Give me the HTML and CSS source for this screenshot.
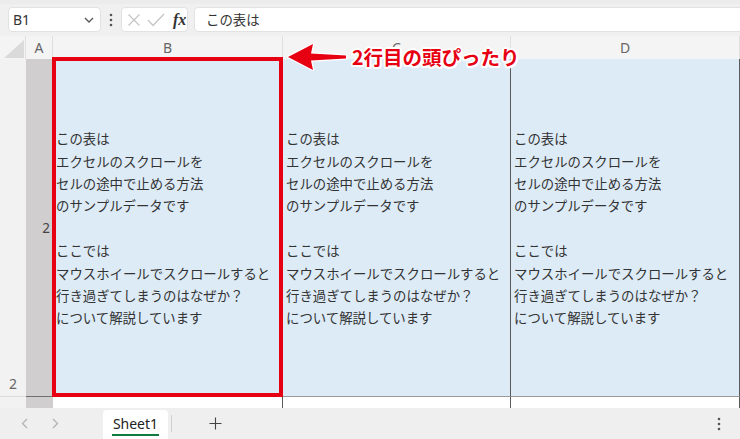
FILE: index.html
```html
<!DOCTYPE html>
<html lang="ja">
<head>
<meta charset="utf-8">
<title>Excel</title>
<link rel="stylesheet" href="styles.css">
</head>
<body>
<div class="app">
  <div class="toolbar">
    <div class="namebox">
      <span class="nb-text">B1</span>
      <svg class="chev" width="10" height="6" viewBox="0 0 10 6"><path d="M1 1 L5 5 L9 1" fill="none" stroke="#555" stroke-width="1.3"/></svg>
    </div>
    <div class="kebab">
      <svg width="4" height="14" viewBox="0 0 4 14"><circle cx="2" cy="2" r="1.3" fill="#555"/><circle cx="2" cy="7" r="1.3" fill="#555"/><circle cx="2" cy="12" r="1.3" fill="#555"/></svg>
    </div>
    <div class="fxbox">
      <svg width="14" height="14" viewBox="0 0 14 14"><path d="M1.5 1.5 L12.5 12.5 M12.5 1.5 L1.5 12.5" stroke="#c4c4c4" stroke-width="1.2"/></svg>
      <svg width="18" height="14" viewBox="0 0 18 14"><path d="M1 7 L6 12.5 L17 1" fill="none" stroke="#c4c4c4" stroke-width="1.2"/></svg>
      <span class="fx">fx</span>
    </div>
    <div class="formula">この表は</div>
  </div>

  <div class="grid">
    <div class="hdr corner"><div class="tri"></div></div>
    <div class="hdr">A</div>
    <div class="hdr">B</div>
    <div class="hdr">C</div>
    <div class="hdr">D</div>

    <div class="rh rh2">2</div>
    <div class="colA colA2">2</div>
    <div class="cell">
      <div class="lines">この表は<br>エクセルのスクロールを<br>セルの途中で止める方法<br>のサンプルデータです<br><br>ここでは<br>マウスホイールでスクロールすると<br>行き過ぎてしまうのはなぜか？<br>について解説しています</div>
    </div>
    <div class="cell">
      <div class="lines">この表は<br>エクセルのスクロールを<br>セルの途中で止める方法<br>のサンプルデータです<br><br>ここでは<br>マウスホイールでスクロールすると<br>行き過ぎてしまうのはなぜか？<br>について解説しています</div>
    </div>
    <div class="cell">
      <div class="lines">この表は<br>エクセルのスクロールを<br>セルの途中で止める方法<br>のサンプルデータです<br><br>ここでは<br>マウスホイールでスクロールすると<br>行き過ぎてしまうのはなぜか？<br>について解説しています</div>
    </div>

    <div class="rh rh3"></div>
    <div class="colA colA3"></div>
    <div class="cell3"></div>
    <div class="cell3"></div>
    <div class="cell3"></div>
  </div>

  <div class="tabs">
    <div class="nav">
      <svg width="7" height="11" viewBox="0 0 7 11"><path d="M6 1 L1.5 5.5 L6 10" fill="none" stroke="#b0b0b0" stroke-width="1.2"/></svg>
      <svg width="7" height="11" viewBox="0 0 7 11"><path d="M1 1 L5.5 5.5 L1 10" fill="none" stroke="#b0b0b0" stroke-width="1.2"/></svg>
    </div>
    <div class="tab"><span class="tab-label">Sheet1</span></div>
    <div class="sep"></div>
    <div class="add">
      <svg width="13" height="13" viewBox="0 0 13 13"><path d="M6.5 0.5 V12.5 M0.5 6.5 H12.5" stroke="#444" stroke-width="1.1"/></svg>
    </div>
    <div class="spacer"></div>
    <div class="more">
      <svg width="4" height="14" viewBox="0 0 4 14"><circle cx="2" cy="2" r="1.3" fill="#555"/><circle cx="2" cy="7" r="1.3" fill="#555"/><circle cx="2" cy="12" r="1.3" fill="#555"/></svg>
    </div>
  </div>

  <div class="highlight"></div>
  <div class="callout">
    <svg class="arrow" width="72" height="42" viewBox="0 0 72 42"><path d="M8 21 L33 8 L31 17.5 L66 19.5 L66 22.5 L31 24.5 L33 34 Z" fill="#e60012" stroke="#fff" stroke-width="2.5" stroke-linejoin="round" paint-order="stroke"/></svg>
    <span class="callout-text">2行目の頭ぴったり</span>
  </div>
</div>
</body>
</html>
```

FILE: styles.css
```css
html, body {
  margin: 0;
  padding: 0;
}
body {
  width: 740px;
  height: 439px;
  overflow: hidden;
  background: #f0f0f0;
  font-family: "Noto Sans", "Noto Sans CJK JP", sans-serif;
  color: #333;
}
.app {
  position: relative;
  width: 740px;
  height: 439px;
  overflow: hidden;
}

/* toolbar */
.toolbar {
  height: 36px;
  box-sizing: border-box;
  display: flex;
  align-items: flex-start;
  padding: 3px 0 0 8px;
  background: #f0f0f0;
  border-top: 4px solid #ececec;
}
.namebox {
  width: 93px;
  height: 25px;
  box-sizing: border-box;
  background: #fff;
  border: 1px solid #e2e2e2;
  border-radius: 4px;
  display: flex;
  align-items: center;
  justify-content: space-between;
  padding: 0 6px 0 4px;
}
.nb-text {
  font-size: 14px;
  color: #333;
}
.kebab {
  width: 20px;
  height: 25px;
  display: flex;
  align-items: center;
  justify-content: center;
}
.fxbox {
  width: 67px;
  height: 25px;
  box-sizing: border-box;
  background: #fff;
  border: 1px solid #e2e2e2;
  border-radius: 4px;
  display: flex;
  align-items: center;
  padding-left: 5px;
  gap: 6px;
}
.fx {
  font-family: "Liberation Serif", "DejaVu Serif", serif;
  font-style: italic;
  font-weight: bold;
  font-size: 16px;
  color: #333;
  margin-left: 2px;
}
.formula {
  flex: 1;
  height: 25px;
  box-sizing: border-box;
  margin-left: 6px;
  margin-right: -6px;
  background: #fff;
  border: 1px solid #e2e2e2;
  border-radius: 4px;
  font-family: "Noto Sans CJK JP", sans-serif;
  font-size: 13.4px;
  line-height: 23px;
  padding-left: 11px;
  color: #333;
}

/* grid */
.grid {
  display: grid;
  grid-template-columns: 26px 27px 230px 228px 229px;
  grid-template-rows: 23px 338px 11px;
}
.hdr {
  background: #f4f4f4;
  border-right: 1px solid #e0e0e0;
  box-sizing: border-box;
  display: flex;
  align-items: center;
  justify-content: center;
  font-size: 14px;
  color: #666;
}
.corner {
  justify-content: flex-end;
  align-items: flex-end;
  padding: 0 1px 1px 0;
}
.tri {
  width: 20px;
  height: 18px;
  background: #dadada;
  clip-path: polygon(100% 0, 100% 100%, 0 100%);
}
.rh {
  background: #f2f2f2;
  box-sizing: border-box;
}
.rh2 {
  display: flex;
  align-items: flex-end;
  padding: 0 0 3px 9px;
  font-size: 14px;
  color: #666;
  border-bottom: 1px solid #dcdcdc;
}
.colA {
  background: #d0cece;
  box-sizing: border-box;
}
.colA2 {
  display: flex;
  align-items: center;
  justify-content: flex-end;
  padding-right: 3px;
  font-size: 13.5px;
  color: #444;
  border-bottom: 1px solid #6e6e6e;
}
.cell {
  background: #ddebf7;
  box-sizing: border-box;
  border-right: 1px solid #5a5a5a;
  border-bottom: 1px solid #9a9a9a;
  display: flex;
  align-items: center;
  padding-left: 3px;
  font-family: "Noto Sans CJK JP", sans-serif;
  font-size: 13.4px;
  line-height: 22.4px;
  color: #333;
  white-space: nowrap;
  overflow: hidden;
}
.lines {
  padding-top: 1px;
}
.cell3 {
  background: #fff;
  box-sizing: border-box;
  border-right: 1px solid #5a5a5a;
}

/* sheet tabs */
.tabs {
  height: 31px;
  display: flex;
  align-items: stretch;
  background: #efefef;
}
.nav {
  width: 103px;
  display: flex;
  align-items: center;
  gap: 24px;
  padding-left: 21px;
  box-sizing: border-box;
}
.tab {
  width: 65px;
  margin-top: 2px;
  background: #fff;
  border-radius: 4px 4px 0 0;
  display: flex;
  align-items: center;
  justify-content: center;
}
.tab-label {
  font-size: 14px;
  color: #222;
  line-height: 20px;
  border-bottom: 2px solid #107c41;
  padding: 0 1px;
  margin-top: 1px;
}
.sep {
  width: 1px;
  margin: 7px 0 7px 3px;
  background: #cfcfcf;
}
.add {
  width: 87px;
  display: flex;
  align-items: center;
  justify-content: center;
}
.spacer {
  flex: 1;
}
.more {
  width: 40px;
  display: flex;
  align-items: center;
  justify-content: center;
  margin-right: 1px;
}

/* overlays */
.highlight {
  position: absolute;
  left: 52px;
  top: 57px;
  width: 231px;
  height: 340px;
  box-sizing: border-box;
  border: 4px solid #e60012;
}
.callout {
  position: absolute;
  left: 280px;
  top: 36px;
  display: flex;
  align-items: center;
  height: 42px;
}
.callout-text {
  font-family: "Noto Sans CJK JP", sans-serif;
  font-weight: bold;
  font-size: 19.5px;
  line-height: 24px;
  color: #e60012;
  text-shadow:
    0 0 3px #fff, 0 0 3px #fff, 0 0 3px #fff,
    2px 0 0 #fff, -2px 0 0 #fff, 0 2px 0 #fff, 0 -2px 0 #fff,
    1.5px 1.5px 0 #fff, -1.5px 1.5px 0 #fff, 1.5px -1.5px 0 #fff, -1.5px -1.5px 0 #fff;
}
```
